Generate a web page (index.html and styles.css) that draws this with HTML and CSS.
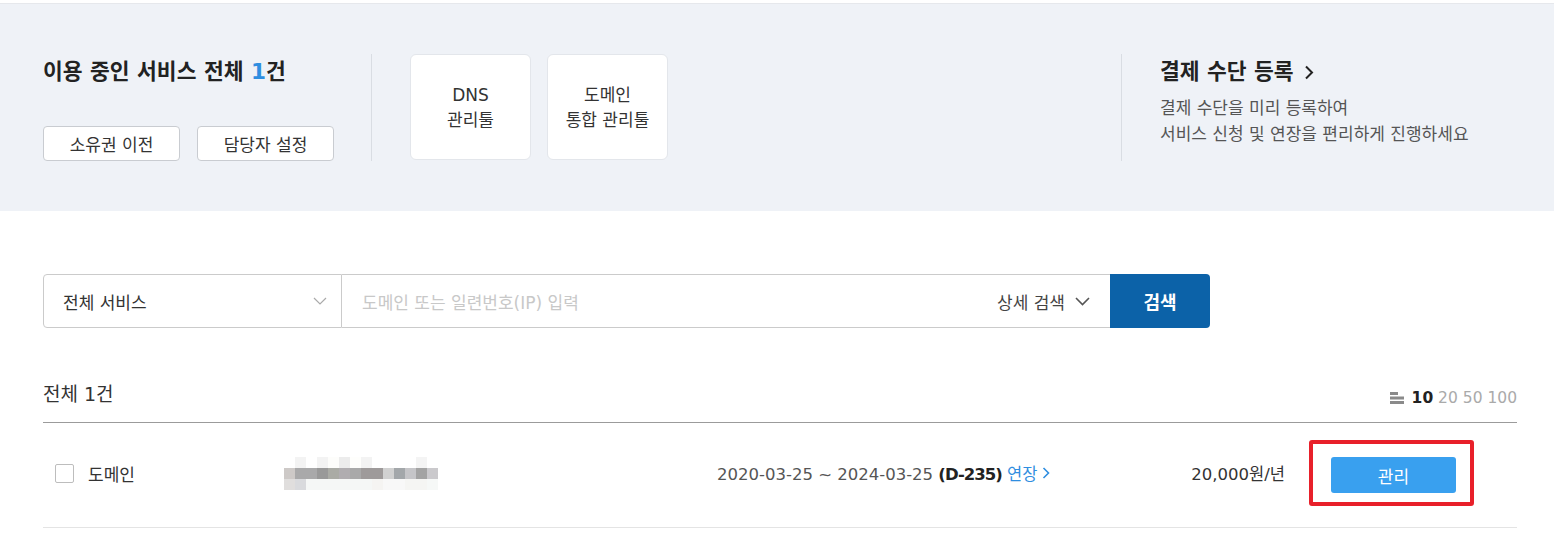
FILE: index.html
```html
<!DOCTYPE html>
<html lang="ko">
<head>
<meta charset="utf-8">
<title>서비스 관리</title>
<link rel="stylesheet" href="styles.css">
</head>
<body>
<section class="summary">
  <div class="summary-left">
    <h2 class="summary-title">이용 중인 서비스 전체 <span class="count">1</span>건</h2>
    <div class="summary-buttons">
      <button class="btn-line">소유권 이전</button>
      <button class="btn-line">담당자 설정</button>
    </div>
  </div>
  <div class="summary-cards">
    <a class="tool-card">DNS<br>관리툴</a>
    <a class="tool-card">도메인<br>통합 관리툴</a>
  </div>
  <div class="summary-pay">
    <div class="pay-title">결제 수단 등록
      <svg class="pay-chev" width="10" height="15" viewBox="0 0 10 15"><path d="M2 1.5 L8 7.5 L2 13.5" fill="none" stroke="#222" stroke-width="2"/></svg>
    </div>
    <p class="pay-desc">결제 수단을 미리 등록하여<br>서비스 신청 및 연장을 편리하게 진행하세요</p>
  </div>
</section>

<main class="content">
  <div class="search">
    <div class="search-select">
      <span>전체 서비스</span>
      <svg width="14" height="8" viewBox="0 0 14 8"><path d="M1 1 L7 7 L13 1" fill="none" stroke="#aaa" stroke-width="1.2"/></svg>
    </div>
    <div class="search-input">
      <span class="placeholder">도메인 또는 일련번호(IP) 입력</span>
      <span class="detail">상세 검색
        <svg width="15" height="9" viewBox="0 0 15 9"><path d="M1 1 L7.5 7.5 L14 1" fill="none" stroke="#555" stroke-width="1.6"/></svg>
      </span>
    </div>
    <button class="search-btn">검색</button>
  </div>

  <div class="list-head">
    <span class="total">전체 1건</span>
    <div class="page-size">
      <svg width="14" height="12" viewBox="0 0 14 12"><rect x="0" y="0" width="8" height="3" fill="#8a8a8a"/><rect x="0" y="4.5" width="14" height="3" fill="#8a8a8a"/><rect x="0" y="9" width="14" height="3" fill="#8a8a8a"/></svg>
      <span class="sizes"><b>10</b> 20 50 100</span>
    </div>
  </div>

  <div class="row">
    <div class="cell-type"><span class="checkbox"></span><span>도메인</span></div>
    <div class="cell-id"><div class="mosaic"><i class="m-top"></i><i class="m-mid"></i><i class="m-bot"></i></div></div>
    <div class="cell-date">2020-03-25 ~ 2024-03-25 <b>(D-235)</b> <a class="renew">연장
      <svg width="8" height="12" viewBox="0 0 8 12"><path d="M1.5 1 L6.5 6 L1.5 11" fill="none" stroke="#2f8ee0" stroke-width="1.6"/></svg></a></div>
    <div class="cell-price">20,000원/년</div>
    <div class="cell-action"><button class="btn-manage">관리</button></div>
  </div>
</main>
</body>
</html>
```

FILE: styles.css
```css
* { box-sizing: border-box; }
html, body { margin: 0; padding: 0; background: #fff; }
body {
  font-family: "DejaVu Sans", "Noto Sans CJK KR", sans-serif;
  color: #222;
  font-size: 17px;
}
button { font-family: inherit; cursor: pointer; }

.summary {
  margin-top: 3px;
  border-top: 1px solid #e6e8ec;
  background: #eff2f7;
  height: 208px;
  padding: 50px 0 0 43px;
  display: flex;
  align-items: flex-start;
}
.summary-left {
  width: 329px;
  height: 107px;
  border-right: 1px solid #d9dde3;
  display: flex;
  flex-direction: column;
  justify-content: space-between;
}
.summary-title {
  margin: 4px 0 0;
  font-size: 21.5px;
  font-weight: 700;
  line-height: 28px;
  color: #222;
}
.summary-title .count { color: #2f8ee0; }
.summary-buttons { display: flex; gap: 17px; }
.btn-line {
  width: 137px;
  height: 35px;
  background: #fff;
  border: 1px solid #c9ccd1;
  border-radius: 4px;
  font-size: 17px;
  color: #333;
  padding: 0;
}
.summary-cards {
  display: flex;
  gap: 16px;
  padding-left: 38px;
  width: 750px;
  height: 107px;
  border-right: 1px solid #d9dde3;
}
.tool-card {
  width: 121px;
  height: 106px;
  background: #fff;
  border: 1px solid #e3e6eb;
  border-radius: 6px;
  display: flex;
  align-items: center;
  justify-content: center;
  text-align: center;
  font-size: 17px;
  line-height: 25px;
  color: #333;
  padding-top: 2px;
}
.summary-pay { padding-left: 38px; }
.pay-title {
  margin-top: 4px;
  font-size: 21.5px;
  font-weight: 700;
  line-height: 28px;
  color: #222;
  display: flex;
  align-items: center;
  gap: 10px;
}
.pay-desc {
  margin: 9px 0 0;
  font-size: 17px;
  line-height: 26px;
  color: #555;
}

.content { padding: 0 37px 0 43px; }

.search {
  margin-top: 63px;
  display: flex;
  height: 54px;
  width: 1167px;
}
.search-select {
  width: 299px;
  border: 1px solid #cbcbcb;
  border-radius: 4px 0 0 4px;
  display: flex;
  align-items: center;
  justify-content: space-between;
  padding: 0 14px 0 19px;
  color: #333;
}
.search-input {
  flex: 1;
  border-top: 1px solid #cbcbcb;
  border-bottom: 1px solid #cbcbcb;
  display: flex;
  align-items: center;
  justify-content: space-between;
  padding: 0 20px;
}
.placeholder { color: #c8c8c8; }
.detail {
  color: #444;
  display: flex;
  align-items: center;
  gap: 10px;
}
.search-btn {
  width: 100px;
  background: #0c62a8;
  border: none;
  border-radius: 0 4px 4px 0;
  color: #fff;
  font-size: 18px;
  font-weight: 700;
}

.list-head {
  height: 95px;
  display: flex;
  justify-content: space-between;
  align-items: flex-end;
  border-bottom: 1px solid #9b9b9b;
  padding-bottom: 14px;
}
.total { font-size: 19px; line-height: 28px; color: #333; }
.page-size {
  display: flex;
  align-items: center;
  gap: 8px;
  font-size: 15.5px;
  line-height: 22px;
  color: #aaa;
  margin-bottom: -1px;
}
.sizes b { color: #222; }

.row {
  display: grid;
  grid-template-columns: 229px 433px 1fr auto 165px;
  align-items: center;
  padding: 17px 43px 21px 12px;
  border-bottom: 1px solid #e4e4e4;
}
.cell-type { display: flex; align-items: center; gap: 14px; color: #333; }
.checkbox {
  width: 19px;
  height: 19px;
  border: 1px solid #bdbdbd;
  border-radius: 2px;
  background: #fff;
}
.mosaic { display: flex; flex-direction: column; width: 154px; }
.mosaic i { display: block; height: 11px; }
.m-top {
  background: linear-gradient(90deg,
    #fff 0 11px, #f3f3f3 11px 22px, #fff 22px 33px, #f3f3f3 33px 44px,
    #fdfdfb 44px 55px, #ececec 55px 66px, #fefefc 66px 77px, #f3f3f3 77px 88px,
    #fff 88px 132px, #f4f4f4 132px 143px, #fff 143px 154px);
}
.m-mid {
  background: linear-gradient(90deg,
    #cdc9c7 0 11px, #a9a9aa 11px 33px, #999 33px 44px, #aaaba5 44px 55px,
    #b0adb0 55px 66px, #a9a9a9 66px 77px, #9e9a9a 77px 99px, #d1d1d1 99px 110px,
    #a3a7aa 110px 121px, #c5c5c8 121px 132px, #a3a3a3 132px 143px, #cac9cc 143px 154px);
}
.m-bot {
  background: linear-gradient(90deg,
    #e0dedd 0 11px, #d9dadd 11px 22px, #f5f7f6 22px 88px, #f5f4f2 88px 99px,
    #f8f8f8 99px 121px, #f5f5f3 121px 143px, #f6f8f7 143px 154px);
}
.cell-date { color: #555; white-space: nowrap; font-size: 16.5px; }
.cell-date b { color: #222; font-weight: 700; letter-spacing: -1px; }
.renew {
  color: #2f8ee0;
  display: inline-flex;
  align-items: center;
  gap: 5px;
}
.cell-price { color: #333; margin-right: 24px; font-size: 16.5px; }
.cell-action {
  border: 4px solid #e8202a;
  border-radius: 3px;
  height: 66px;
  padding: 13px 14px 9px 18px;
}
.btn-manage {
  width: 125px;
  height: 36px;
  background: #39a0ef;
  border: none;
  border-radius: 3px;
  color: #fff;
  font-size: 17px;
  padding: 0;
}
```
